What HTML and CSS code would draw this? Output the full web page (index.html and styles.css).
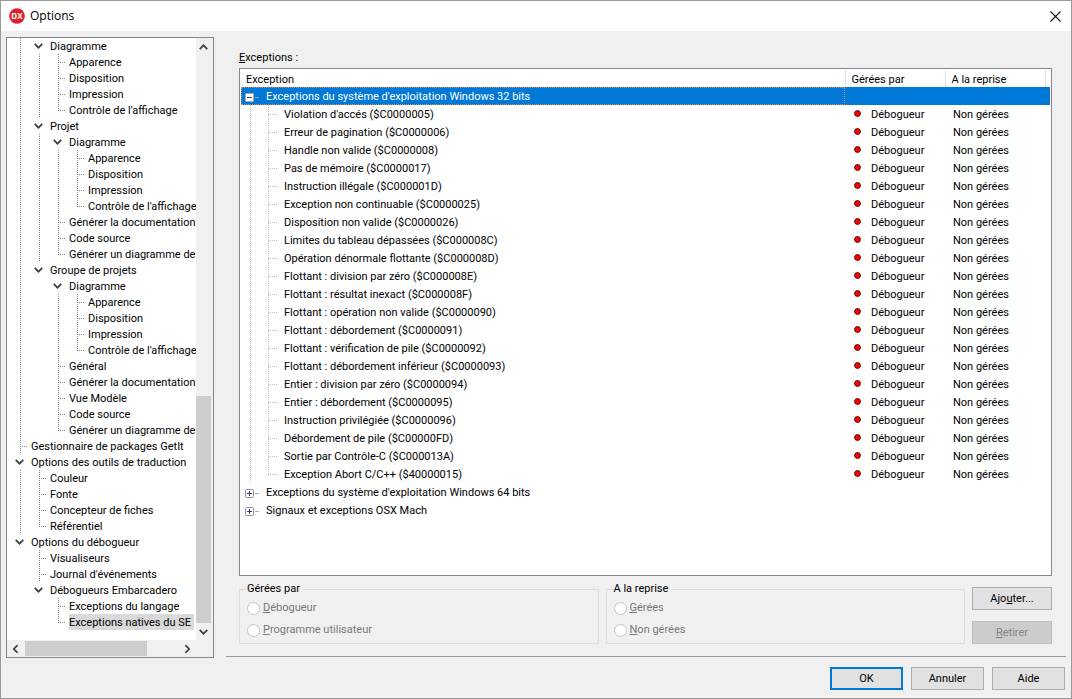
FILE: index.html
```html
<!DOCTYPE html>
<html lang="fr">
<head>
<meta charset="utf-8">
<title>Options</title>
<link rel="stylesheet" href="styles.css">
</head>
<body>
<svg class="defs" aria-hidden="true">
  <symbol id="chev" viewBox="0 0 9 6"><path d="M0.7 0.9 4.5 4.7 8.3 0.9" fill="none" stroke="#404040" stroke-width="1.7"/></symbol>
  <symbol id="dot" viewBox="0 0 7 7"><circle cx="3.5" cy="3.5" r="2.9" fill="#f00" stroke="#500000" stroke-width="1"/></symbol>
  <symbol id="plus" viewBox="0 0 9 9"><rect x="0.5" y="0.5" width="8" height="8" rx="1" fill="#fff" stroke="#919191"/><path d="M2 4.5H7M4.5 2V7" stroke="#2b3f78"/></symbol>
  <symbol id="minus" viewBox="0 0 9 9"><rect x="0.5" y="0.5" width="8" height="8" rx="1" fill="#fff" stroke="#b5a79c"/><path d="M2 4.5H7" stroke="#2b3f78"/></symbol>
</svg>
<div class="window">
  <header class="titlebar">
    <svg class="logo" viewBox="0 0 16 16" aria-hidden="true"><circle cx="8" cy="8" r="7.8" fill="#e01f2d"/><text x="8" y="11" text-anchor="middle" class="logo-text">DX</text></svg>
    <h1 class="title">Options</h1>
    <button class="close" type="button" aria-label="Fermer"><svg viewBox="0 0 11 11" width="11" height="11"><path d="M0.5 0.5 10.5 10.5M10.5 0.5 0.5 10.5" stroke="#111" stroke-width="1.1"/></svg></button>
  </header>
  <div class="content">
    <nav class="sidebar" aria-label="Catégories">
      <div class="tree-area">
        <ul class="tree">
          <li><ul>
            <li><div class="row open"><svg class="chev"><use href="#chev"/></svg><span>Diagramme</span></div><ul>
              <li><div class="row"><span>Apparence</span></div></li>
              <li><div class="row"><span>Disposition</span></div></li>
              <li><div class="row"><span>Impression</span></div></li>
              <li><div class="row"><span>Contrôle de l'affichage</span></div></li>
            </ul></li>
            <li><div class="row open"><svg class="chev"><use href="#chev"/></svg><span>Projet</span></div><ul>
              <li><div class="row open"><svg class="chev"><use href="#chev"/></svg><span>Diagramme</span></div><ul>
                <li><div class="row"><span>Apparence</span></div></li>
                <li><div class="row"><span>Disposition</span></div></li>
                <li><div class="row"><span>Impression</span></div></li>
                <li><div class="row"><span>Contrôle de l'affichage</span></div></li>
              </ul></li>
              <li><div class="row"><span>Générer la documentation</span></div></li>
              <li><div class="row"><span>Code source</span></div></li>
              <li><div class="row"><span>Générer un diagramme de</span></div></li>
            </ul></li>
            <li><div class="row open"><svg class="chev"><use href="#chev"/></svg><span>Groupe de projets</span></div><ul>
              <li><div class="row open"><svg class="chev"><use href="#chev"/></svg><span>Diagramme</span></div><ul>
                <li><div class="row"><span>Apparence</span></div></li>
                <li><div class="row"><span>Disposition</span></div></li>
                <li><div class="row"><span>Impression</span></div></li>
                <li><div class="row"><span>Contrôle de l'affichage</span></div></li>
              </ul></li>
              <li><div class="row"><span>Général</span></div></li>
              <li><div class="row"><span>Générer la documentation</span></div></li>
              <li><div class="row"><span>Vue Modèle</span></div></li>
              <li><div class="row"><span>Code source</span></div></li>
              <li><div class="row"><span>Générer un diagramme de</span></div></li>
            </ul></li>
          </ul></li>
          <li><div class="row"><span>Gestionnaire de packages GetIt</span></div></li>
          <li><div class="row open"><svg class="chev"><use href="#chev"/></svg><span>Options des outils de traduction</span></div><ul>
            <li><div class="row"><span>Couleur</span></div></li>
            <li><div class="row"><span>Fonte</span></div></li>
            <li><div class="row"><span>Concepteur de fiches</span></div></li>
            <li><div class="row"><span>Référentiel</span></div></li>
          </ul></li>
          <li><div class="row open"><svg class="chev"><use href="#chev"/></svg><span>Options du débogueur</span></div><ul>
            <li><div class="row"><span>Visualiseurs</span></div></li>
            <li><div class="row"><span>Journal d'événements</span></div></li>
            <li><div class="row open"><svg class="chev"><use href="#chev"/></svg><span>Débogueurs Embarcadero</span></div><ul>
              <li><div class="row"><span>Exceptions du langage</span></div></li>
              <li><div class="row"><span class="current">Exceptions natives du SE</span></div></li>
            </ul></li>
          </ul></li>
        </ul>
        <div class="vbar">
          <button class="arrow up" type="button" aria-label="Haut"><svg class="chev"><use href="#chev"/></svg></button>
          <div class="vtrack"><div class="vthumb"></div></div>
          <button class="arrow" type="button" aria-label="Bas"><svg class="chev"><use href="#chev"/></svg></button>
        </div>
      </div>
      <div class="hbar">
        <button class="arrow left" type="button" aria-label="Gauche"><svg class="chev"><use href="#chev"/></svg></button>
        <div class="htrack"><div class="hthumb"></div></div>
        <button class="arrow right" type="button" aria-label="Droite"><svg class="chev"><use href="#chev"/></svg></button>
        <div class="corner"></div>
      </div>
    </nav>
    <main class="page">
      <section class="panel">
        <h2 class="label" id="lbl"><u>E</u>xceptions :</h2>
        <div class="list">
          <table class="grid" aria-labelledby="lbl">
            <colgroup><col><col class="c2"><col class="c3"><col class="c4"></colgroup>
            <thead><tr><th>Exception</th><th>Gérées par</th><th>A la reprise</th><th class="end"></th></tr></thead>
            <tbody>
              <tr class="group selected"><td><div class="cell"><svg class="box"><use href="#minus"/></svg>Exceptions du système d'exploitation Windows 32 bits</div></td><td></td><td></td><td></td></tr>
              <tr><td><div class="cell">Violation d'accés ($C0000005)</div></td><td><svg class="dot"><use href="#dot"/></svg>Débogueur</td><td>Non gérées</td><td></td></tr>
              <tr><td><div class="cell">Erreur de pagination ($C0000006)</div></td><td><svg class="dot"><use href="#dot"/></svg>Débogueur</td><td>Non gérées</td><td></td></tr>
              <tr><td><div class="cell">Handle non valide ($C0000008)</div></td><td><svg class="dot"><use href="#dot"/></svg>Débogueur</td><td>Non gérées</td><td></td></tr>
              <tr><td><div class="cell">Pas de mémoire ($C0000017)</div></td><td><svg class="dot"><use href="#dot"/></svg>Débogueur</td><td>Non gérées</td><td></td></tr>
              <tr><td><div class="cell">Instruction illégale ($C000001D)</div></td><td><svg class="dot"><use href="#dot"/></svg>Débogueur</td><td>Non gérées</td><td></td></tr>
              <tr><td><div class="cell">Exception non continuable ($C0000025)</div></td><td><svg class="dot"><use href="#dot"/></svg>Débogueur</td><td>Non gérées</td><td></td></tr>
              <tr><td><div class="cell">Disposition non valide ($C0000026)</div></td><td><svg class="dot"><use href="#dot"/></svg>Débogueur</td><td>Non gérées</td><td></td></tr>
              <tr><td><div class="cell">Limites du tableau dépassées ($C000008C)</div></td><td><svg class="dot"><use href="#dot"/></svg>Débogueur</td><td>Non gérées</td><td></td></tr>
              <tr><td><div class="cell">Opération dénormale flottante ($C000008D)</div></td><td><svg class="dot"><use href="#dot"/></svg>Débogueur</td><td>Non gérées</td><td></td></tr>
              <tr><td><div class="cell">Flottant : division par zéro ($C000008E)</div></td><td><svg class="dot"><use href="#dot"/></svg>Débogueur</td><td>Non gérées</td><td></td></tr>
              <tr><td><div class="cell">Flottant : résultat inexact ($C000008F)</div></td><td><svg class="dot"><use href="#dot"/></svg>Débogueur</td><td>Non gérées</td><td></td></tr>
              <tr><td><div class="cell">Flottant : opération non valide ($C0000090)</div></td><td><svg class="dot"><use href="#dot"/></svg>Débogueur</td><td>Non gérées</td><td></td></tr>
              <tr><td><div class="cell">Flottant : débordement ($C0000091)</div></td><td><svg class="dot"><use href="#dot"/></svg>Débogueur</td><td>Non gérées</td><td></td></tr>
              <tr><td><div class="cell">Flottant : vérification de pile ($C0000092)</div></td><td><svg class="dot"><use href="#dot"/></svg>Débogueur</td><td>Non gérées</td><td></td></tr>
              <tr><td><div class="cell">Flottant : débordement inférieur ($C0000093)</div></td><td><svg class="dot"><use href="#dot"/></svg>Débogueur</td><td>Non gérées</td><td></td></tr>
              <tr><td><div class="cell">Entier : division par zéro ($C0000094)</div></td><td><svg class="dot"><use href="#dot"/></svg>Débogueur</td><td>Non gérées</td><td></td></tr>
              <tr><td><div class="cell">Entier : débordement ($C0000095)</div></td><td><svg class="dot"><use href="#dot"/></svg>Débogueur</td><td>Non gérées</td><td></td></tr>
              <tr><td><div class="cell">Instruction privilégiée ($C0000096)</div></td><td><svg class="dot"><use href="#dot"/></svg>Débogueur</td><td>Non gérées</td><td></td></tr>
              <tr><td><div class="cell">Débordement de pile ($C00000FD)</div></td><td><svg class="dot"><use href="#dot"/></svg>Débogueur</td><td>Non gérées</td><td></td></tr>
              <tr><td><div class="cell">Sortie par Contrôle-C ($C000013A)</div></td><td><svg class="dot"><use href="#dot"/></svg>Débogueur</td><td>Non gérées</td><td></td></tr>
              <tr class="last"><td><div class="cell">Exception Abort C/C++ ($40000015)</div></td><td><svg class="dot"><use href="#dot"/></svg>Débogueur</td><td>Non gérées</td><td></td></tr>
              <tr class="group"><td><div class="cell"><svg class="box"><use href="#plus"/></svg>Exceptions du système d'exploitation Windows 64 bits</div></td><td></td><td></td><td></td></tr>
              <tr class="group"><td><div class="cell"><svg class="box"><use href="#plus"/></svg>Signaux et exceptions OSX Mach</div></td><td></td><td></td><td></td></tr>
            </tbody>
          </table>
        </div>
        <div class="settings">
          <fieldset class="box-group">
            <legend>Gérées par</legend>
            <label class="radio"><input type="radio" name="by" disabled><span><u>D</u>ébogueur</span></label>
            <label class="radio"><input type="radio" name="by" disabled><span><u>P</u>rogramme utilisateur</span></label>
          </fieldset>
          <fieldset class="box-group">
            <legend>A la reprise</legend>
            <label class="radio"><input type="radio" name="resume" disabled><span><u>G</u>érées</span></label>
            <label class="radio"><input type="radio" name="resume" disabled><span><u>N</u>on gérées</span></label>
          </fieldset>
          <div class="side-buttons">
            <button class="btn" type="button"><span>Ajo<u>u</u>ter...</span></button>
            <button class="btn" type="button" disabled><span><u>R</u>etirer</span></button>
          </div>
        </div>
      </section>
      <footer class="actions">
        <button class="btn default" type="button">OK</button>
        <button class="btn" type="button">Annuler</button>
        <button class="btn" type="button">Aide</button>
      </footer>
    </main>
  </div>
</div>
</body>
</html>
```
FILE: styles.css
```css
* { box-sizing: border-box; }

body {
  margin: 0;
  background: #f0f0f0;
  color: #000;
  font: 11px/16px Roboto, "Liberation Sans", sans-serif;
}

button, input { font: inherit; color: inherit; }
ul { list-style: none; margin: 0; padding: 0; }
.defs { display: none; }

.window {
  display: flex;
  flex-direction: column;
  min-height: 100vh;
  border: 1px solid #9a9a9a;
}

/* Title bar */
.titlebar {
  display: flex;
  align-items: center;
  gap: 5px;
  height: 30px;
  padding: 0 8px;
  background: #fff;
}
.logo { width: 16px; height: 16px; }
.logo-text { font: bold 8px "Open Sans", sans-serif; fill: #fff; }
.title { margin: 0; flex: 1; font: 12px/16px "Open Sans", sans-serif; }
.close {
  display: flex;
  align-items: center;
  justify-content: center;
  width: 15px;
  height: 15px;
  padding: 0;
  border: 0;
  background: none;
}

.content { flex: 1; display: flex; gap: 12px; padding: 5px 5px 8px; }

/* Category tree */
.sidebar {
  align-self: flex-start;
  width: 208px;
  flex: none;
  margin-top: 1px;
  border: 1px solid #828790;
  background: #fff;
}
.tree-area { display: flex; }
.tree { flex: 1; min-width: 0; overflow: hidden; padding-bottom: 10px; }
.tree ul { padding-left: 19px; }
.tree li { white-space: nowrap; }
.tree li:not(:last-child) {
  background: linear-gradient(#888 1px, transparent 1px) 13px 0 / 1px 2px repeat-y;
}
.row { display: flex; align-items: center; gap: 3px; height: 16px; }
.row::before {
  content: "";
  flex: none;
  align-self: flex-start;
  width: 8px;
  height: 9px;
  margin-left: 13px;
  background:
    linear-gradient(#888 1px, transparent 1px) 0 0 / 1px 2px repeat-y,
    linear-gradient(90deg, #888 1px, transparent 1px) 0 100% / 2px 1px repeat-x;
}
.row.open::before { display: none; }
.chev { width: 9px; height: 6px; flex: none; }
.row .chev { width: 21px; height: 16px; padding: 5px 4px 5px 8px; background: #fff; }
.row span { height: 16px; padding: 2px 3px 0 0; line-height: 14px; }
.current { background: #d9d9d9; }

.vbar { display: flex; flex-direction: column; width: 17px; background: #f0f0f0; }
.vtrack { flex: 1; display: flex; flex-direction: column; justify-content: flex-end; padding-right: 2px; }
.vthumb { height: 40%; background: #cdcdcd; }
.hbar { display: flex; height: 17px; background: #f0f0f0; }
.htrack { flex: 1; padding: 1px; }
.hthumb { width: 80%; height: 100%; background: #cdcdcd; }
.corner { width: 17px; }
.arrow {
  display: flex;
  align-items: center;
  justify-content: center;
  flex: none;
  width: 17px;
  height: 17px;
  padding: 0;
  border: 0;
  background: none;
}
.vbar .arrow { width: 15px; }
.up .chev { transform: rotate(180deg); }
.left .chev { transform: rotate(90deg); }
.right .chev { transform: rotate(-90deg); }

/* Settings page */
.page { flex: 1; min-width: 0; display: flex; flex-direction: column; }
.panel {
  flex: 1;
  display: flex;
  flex-direction: column;
  padding: 14px 14px 12px 13px;
  border-bottom: 1px solid #999;
}
.label { margin: 0 0 2px; font-size: 11px; font-weight: normal; }
.list { flex: 1; padding: 1px; border: 1px solid #828790; background: #fff; }

.grid { width: 100%; table-layout: fixed; border-collapse: collapse; }
.c2, .c3 { width: 100px; }
.c4 { width: 5px; }
.grid th {
  height: 17px;
  padding: 2px 5px 0;
  border-right: 1px solid #e0e0e0;
  font-weight: normal;
  line-height: 15px;
  text-align: left;
}
.grid th:nth-child(n+2) { padding-left: 6px; }
.grid .end { padding: 0; border: 0; }
.grid td { height: 18px; padding: 2px 0 0; line-height: 16px; white-space: nowrap; }
.grid td:first-child { padding: 0; }
.grid td:nth-child(2) { padding-left: 9px; }
.grid td:nth-child(3) { padding-left: 8px; }
.cell {
  display: flex;
  align-items: center;
  height: 18px;
  padding: 2px 0 0 43px;
  background:
    linear-gradient(#bbb 1px, transparent 1px) 9px 0 / 1px 2px repeat-y,
    linear-gradient(#bbb 1px, transparent 1px) 27px 0 / 1px 2px repeat-y,
    linear-gradient(90deg, #bbb 1px, transparent 1px) 27px 9px / 2px 1px no-repeat,
    linear-gradient(90deg, #bbb 1px, transparent 1px) 29px 9px / 2px 1px no-repeat,
    linear-gradient(90deg, #bbb 1px, transparent 1px) 31px 9px / 2px 1px no-repeat,
    linear-gradient(90deg, #bbb 1px, transparent 1px) 33px 9px / 2px 1px no-repeat,
    linear-gradient(90deg, #bbb 1px, transparent 1px) 35px 9px / 2px 1px no-repeat;
}
.last .cell { position: relative; }
.last .cell::after {
  content: "";
  position: absolute;
  left: 27px;
  top: 10px;
  width: 1px;
  height: 8px;
  background: #fff;
}
.group .cell {
  gap: 12px;
  padding-left: 4px;
  background: linear-gradient(90deg, transparent 14px, #aaa 14px, #aaa 18px, transparent 18px) 0 10px / 100% 1px no-repeat;
}
.box { width: 9px; height: 9px; flex: none; }
.selected { background: #0078d7; color: #fff; }
.selected .cell { outline: 1px dotted #d98b45; outline-offset: -1px; }
.dot { width: 7px; height: 7px; margin-right: 10px; vertical-align: 1px; }

.settings { display: flex; gap: 7px; margin-top: 5px; }
.box-group {
  flex: 1;
  min-width: 0;
  margin: 0;
  padding: 0 7px 2px;
  border: 1px solid #dcdcdc;
}
.box-group legend { padding: 0 3px 0 0; }
.radio { display: flex; align-items: center; gap: 3px; height: 22px; color: #787878; }
.radio input {
  appearance: none;
  width: 13px;
  height: 13px;
  margin: 0;
  border: 1px solid #c3c3c3;
  border-radius: 50%;
  background: #fff;
}
.side-buttons { display: flex; flex-direction: column; justify-content: space-between; width: 80px; padding-top: 6px; }

.btn {
  width: 73px;
  height: 23px;
  padding: 0;
  border: 1px solid #adadad;
  background: #e1e1e1;
}
.side-buttons .btn { width: 100%; }
.btn:disabled { border-color: #bfbfbf; background: #ccc; color: #838383; }
.default { border: 2px solid #0078d7; }

.actions { display: flex; justify-content: flex-end; gap: 8px; padding: 10px 1px 0 0; }
```
